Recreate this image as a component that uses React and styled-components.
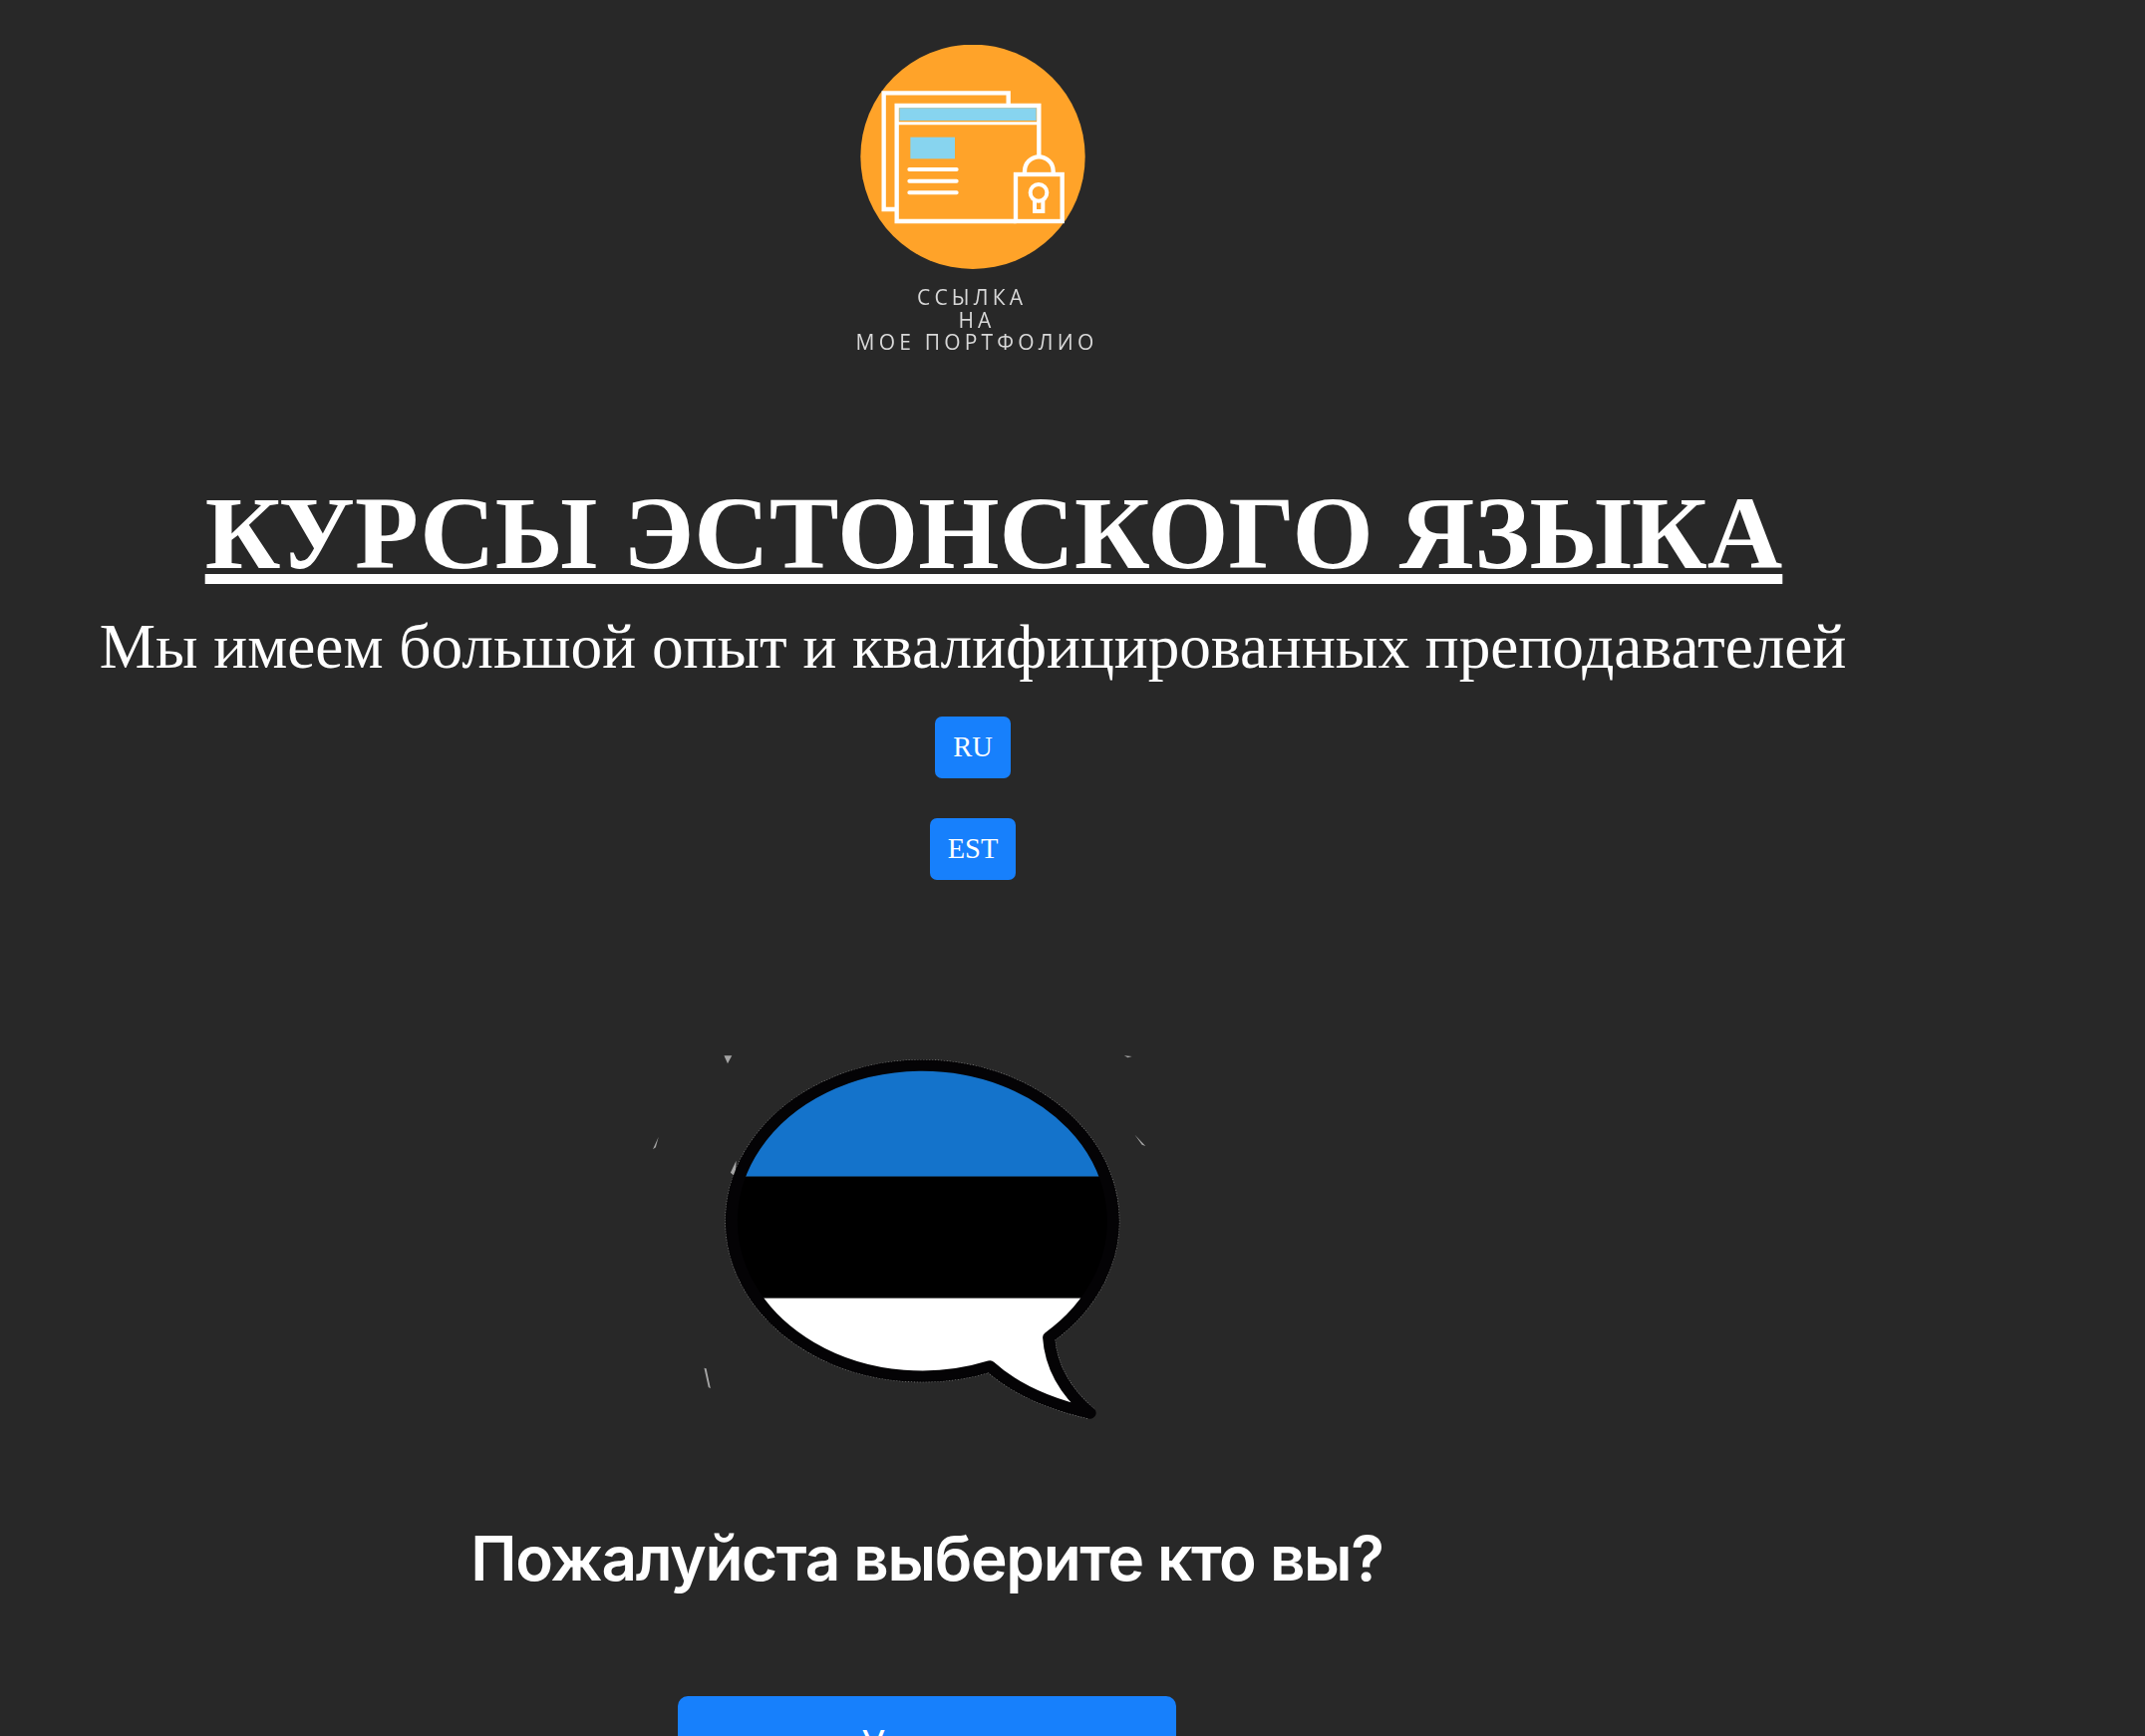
import React from 'react';
import styled, { createGlobalStyle } from 'styled-components';

const GlobalStyle = createGlobalStyle`
  html, body {
    margin: 0;
    height: 1742px;
    overflow: hidden;
    background: #282828;
  }
`;

const Page = styled.div`
  width: 1952px;
  padding-top: 45px;
  display: flex;
  flex-direction: column;
  align-items: center;
  color: #fff;
  font-family: "Liberation Serif", "Times New Roman", serif;
`;

const LogoLink = styled.a`
  display: flex;
  flex-direction: column;
  align-items: center;
  color: #d8d8d8;
  text-decoration: none;
`;

const LogoMark = styled.svg`
  display: block;
  width: 226px;
  height: 225px;
  filter: blur(0.4px);
`;

const LogoCaption = styled.div`
  margin-top: 17px;
  margin-left: 8px;
  font-family: "Open Sans", sans-serif;
  font-size: 21px;
  font-weight: 500;
  line-height: 22.5px;
  letter-spacing: 4.2px;
  text-align: center;
  white-space: nowrap;
  filter: blur(0.4px);
`;

const Title = styled.h1`
  margin: 125px 0 0 42px;
  font-size: 104.5px;
  line-height: 110px;
  font-weight: 700;
  text-decoration: underline;
  text-decoration-thickness: 10px;
  text-underline-offset: 6px;
  white-space: nowrap;
`;

const Subtitle = styled.h2`
  margin: 22px 0 0;
  font-size: 63.3px;
  line-height: 74px;
  font-weight: 400;
  white-space: nowrap;
`;

const LangButton = styled.button`
  display: block;
  height: 62px;
  margin-top: ${({ $gap }) => $gap}px;
  padding: 0 18px;
  border: 0;
  border-radius: 7px;
  background: #1780fc;
  color: #fff;
  font-family: inherit;
  font-size: 28.5px;
`;

const ChoiceSection = styled.section`
  align-self: flex-start;
  width: 1860px;
  display: flex;
  flex-direction: column;
  align-items: center;
`;

const FlagBubble = styled.svg`
  display: block;
  width: 560px;
  height: 420px;
  margin: 147px 60px 0 0;
`;

const Question = styled.h2`
  margin: 76px 0 0;
  font-family: Inter, "Noto Sans", sans-serif;
  font-size: 62px;
  line-height: 76px;
  font-weight: 590;
  letter-spacing: -1.3px;
  white-space: nowrap;
`;

const RoleButton = styled.button`
  width: 500px;
  height: 96px;
  margin-top: 100px;
  border: 0;
  border-radius: 10px;
  background: #1780fc;
  color: #fff;
  font-family: Inter, "Noto Sans", sans-serif;
  font-size: 38px;
`;

const BUBBLE =
  'M1210 936 A536 468 0 1 0 1045 1023 C1120 1096 1226 1140 1326 1164 C1252 1096 1215 1016 1210 936 Z';

const SPECKS = [
  'M298 88 L320 88 L308 112 Z',
  'M1422 88 L1444 90 L1432 94 Z',
  'M98 370 L114 332 L106 364 Z',
  'M1452 326 L1482 360 L1472 356 Z',
  'M242 1028 L248 1030 L260 1090 L254 1086 Z',
  'M316 440 L332 404 L330 452 Z',
];

const App = () => (
  <>
    <GlobalStyle />
    <Page>
      <LogoLink href="#portfolio">
        <LogoMark viewBox="130 45 678 675" aria-hidden="true">
          <circle cx="469" cy="382" r="338" fill="#ffa329" />
          <g fill="none" stroke="#fff" strokeWidth="13">
            <path d="M240 540 H201 V190 H576 V228" />
            <path d="M668 380 V228 H240 V576 H600" />
            <path d="M240 281 H668" strokeWidth="9" />
            <path d="M625 435 V425 A43 43 0 0 1 711 425 V435" />
            <rect x="598" y="435" width="140" height="141" />
            <circle cx="667" cy="490" r="25" strokeWidth="12" />
            <path d="M655 512 V546 H680 V512" strokeWidth="12" />
            <path d="M278 420 H420 M278 455 H420 M278 490 H420" strokeWidth="12" strokeLinecap="round" />
          </g>
          <rect x="248" y="235" width="412" height="38" fill="#87d4ef" />
          <rect x="281" y="323" width="134" height="65" fill="#87d4ef" />
        </LogoMark>
        <LogoCaption>
          ССЫЛКА{'\u00A0'}
          <br />
          НА
          <br />
          МОЕ ПОРТФОЛИО
        </LogoCaption>
      </LogoLink>

      <Title>КУРСЫ ЭСТОНСКОГО ЯЗЫКА</Title>
      <Subtitle>Мы имеем большой опыт и квалифицированных преподавателей</Subtitle>

      <LangButton $gap={33.5}>RU</LangButton>
      <LangButton $gap={40}>EST</LangButton>

      <ChoiceSection>
        <FlagBubble viewBox="0 0 1568 1260" preserveAspectRatio="none" aria-hidden="true">
          <defs>
            <clipPath id="bubbleClip">
              <path d={BUBBLE} />
            </clipPath>
          </defs>
          {SPECKS.map((d) => (
            <path key={d} d={d} fill="#cfcfcf" opacity="0.75" />
          ))}
          <path d={BUBBLE} fill="none" stroke="#bdbdbd" strokeWidth="37" strokeDasharray="3 5" strokeLinejoin="round" opacity="0.7" />
          <g clipPath="url(#bubbleClip)">
            <rect x="250" y="80" width="1200" height="372" fill="#1473cb" />
            <rect x="250" y="452" width="1200" height="366" fill="#000" />
            <rect x="250" y="818" width="1200" height="360" fill="#fff" />
          </g>
          <path d={BUBBLE} fill="none" stroke="#040305" strokeWidth="34" strokeLinejoin="round" />
        </FlagBubble>
        <Question>Пожалуйста выберите кто вы?</Question>
        <RoleButton>Ученик</RoleButton>
      </ChoiceSection>
    </Page>
  </>
);

export default App;
